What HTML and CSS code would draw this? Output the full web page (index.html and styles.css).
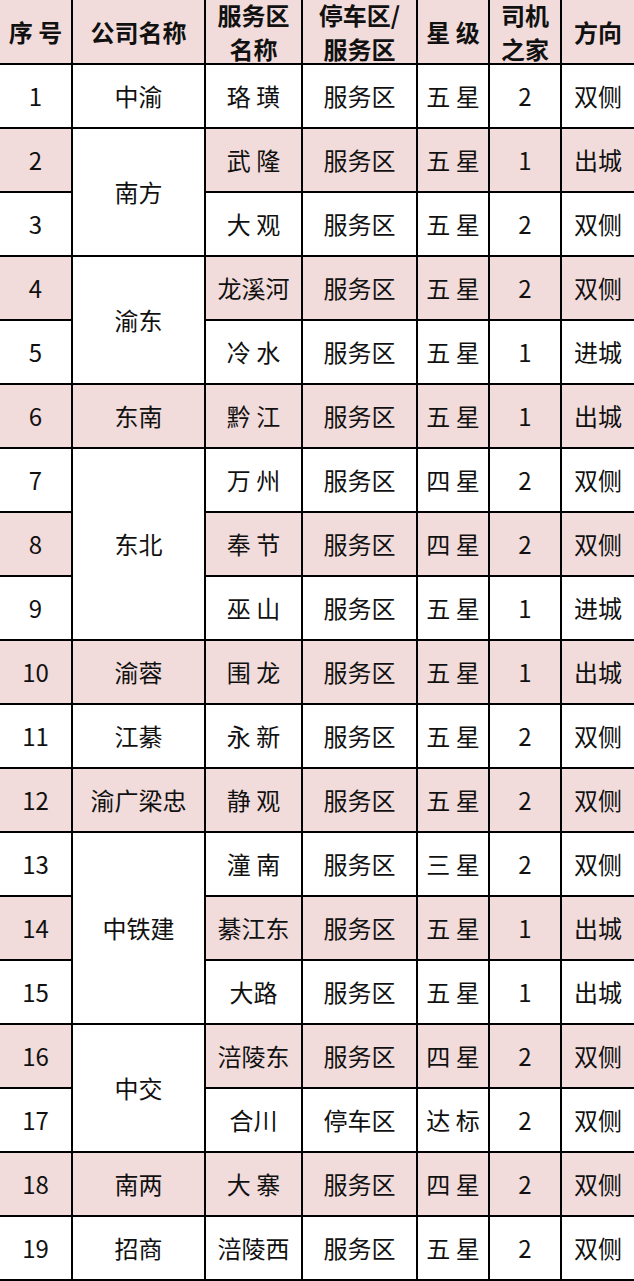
FILE: index.html
```html
<!DOCTYPE html>
<html lang="zh-CN">
<head>
<meta charset="utf-8">
<title>服务区星级表</title>
<link rel="stylesheet" href="styles.css">
</head>
<body>
<div class="grid">
  <div class="c h"><span class="ln">序 号</span></div>
  <div class="c h"><span class="ln">公司名称</span></div>
  <div class="c h"><span class="ln">服务区</span><span class="ln">名称</span></div>
  <div class="c h"><span class="ln">停车区/</span><span class="ln">服务区</span></div>
  <div class="c h"><span class="ln">星 级</span></div>
  <div class="c h"><span class="ln">司机</span><span class="ln">之家</span></div>
  <div class="c h"><span class="ln">方向</span></div>

  <div class="c">1</div><div class="c">中渝</div><div class="c">珞 璜</div><div class="c">服务区</div><div class="c">五 星</div><div class="c">2</div><div class="c">双侧</div>

  <div class="c p">2</div><div class="c s2">南方</div><div class="c p">武 隆</div><div class="c p">服务区</div><div class="c p">五 星</div><div class="c p">1</div><div class="c p">出城</div>
  <div class="c">3</div><div class="c">大 观</div><div class="c">服务区</div><div class="c">五 星</div><div class="c">2</div><div class="c">双侧</div>

  <div class="c p">4</div><div class="c s2">渝东</div><div class="c p">龙溪河</div><div class="c p">服务区</div><div class="c p">五 星</div><div class="c p">2</div><div class="c p">双侧</div>
  <div class="c">5</div><div class="c">冷 水</div><div class="c">服务区</div><div class="c">五 星</div><div class="c">1</div><div class="c">进城</div>

  <div class="c p">6</div><div class="c p">东南</div><div class="c p">黔 江</div><div class="c p">服务区</div><div class="c p">五 星</div><div class="c p">1</div><div class="c p">出城</div>

  <div class="c">7</div><div class="c s3">东北</div><div class="c">万 州</div><div class="c">服务区</div><div class="c">四 星</div><div class="c">2</div><div class="c">双侧</div>
  <div class="c p">8</div><div class="c p">奉 节</div><div class="c p">服务区</div><div class="c p">四 星</div><div class="c p">2</div><div class="c p">双侧</div>
  <div class="c">9</div><div class="c">巫 山</div><div class="c">服务区</div><div class="c">五 星</div><div class="c">1</div><div class="c">进城</div>

  <div class="c p">10</div><div class="c p">渝蓉</div><div class="c p">围 龙</div><div class="c p">服务区</div><div class="c p">五 星</div><div class="c p">1</div><div class="c p">出城</div>
  <div class="c">11</div><div class="c">江綦</div><div class="c">永 新</div><div class="c">服务区</div><div class="c">五 星</div><div class="c">2</div><div class="c">双侧</div>
  <div class="c p">12</div><div class="c p">渝广梁忠</div><div class="c p">静 观</div><div class="c p">服务区</div><div class="c p">五 星</div><div class="c p">2</div><div class="c p">双侧</div>

  <div class="c">13</div><div class="c s3">中铁建</div><div class="c">潼 南</div><div class="c">服务区</div><div class="c">三 星</div><div class="c">2</div><div class="c">双侧</div>
  <div class="c p">14</div><div class="c p">綦江东</div><div class="c p">服务区</div><div class="c p">五 星</div><div class="c p">1</div><div class="c p">出城</div>
  <div class="c">15</div><div class="c">大路</div><div class="c">服务区</div><div class="c">五 星</div><div class="c">1</div><div class="c">出城</div>

  <div class="c p">16</div><div class="c s2">中交</div><div class="c p">涪陵东</div><div class="c p">服务区</div><div class="c p">四 星</div><div class="c p">2</div><div class="c p">双侧</div>
  <div class="c">17</div><div class="c">合川</div><div class="c">停车区</div><div class="c">达 标</div><div class="c">2</div><div class="c">双侧</div>

  <div class="c p">18</div><div class="c p">南两</div><div class="c p">大 寨</div><div class="c p">服务区</div><div class="c p">四 星</div><div class="c p">2</div><div class="c p">双侧</div>
  <div class="c">19</div><div class="c">招商</div><div class="c">涪陵西</div><div class="c">服务区</div><div class="c">五 星</div><div class="c">2</div><div class="c">双侧</div>
</div>
</body>
</html>
```
FILE: styles.css
```css
html, body {
  margin: 0;
  padding: 0;
  background: #fff;
}

.grid {
  width: 634px;
  display: grid;
  grid-template-columns: 71px 131px 95px 113px 70px 70px 72px;
  grid-template-rows: 63px repeat(19, 62px);
  gap: 2px;
  padding-bottom: 2px;
  background: #000;
  font-family: "Noto Sans CJK SC", "Noto Sans", sans-serif;
  font-size: 24px;
  color: #111;
}

.c {
  background: #fff;
  display: flex;
  align-items: center;
  justify-content: center;
  text-align: center;
  line-height: 1;
  white-space: pre;
}

.c.p, .c.h {
  background: #f2dcdb;
}

.c.h {
  flex-direction: column;
  gap: 10px;
  font-weight: 700;
}

.ln {
  display: block;
  line-height: 24px;
}

.s2 {
  grid-row: span 2;
}

.s3 {
  grid-row: span 3;
}
```
